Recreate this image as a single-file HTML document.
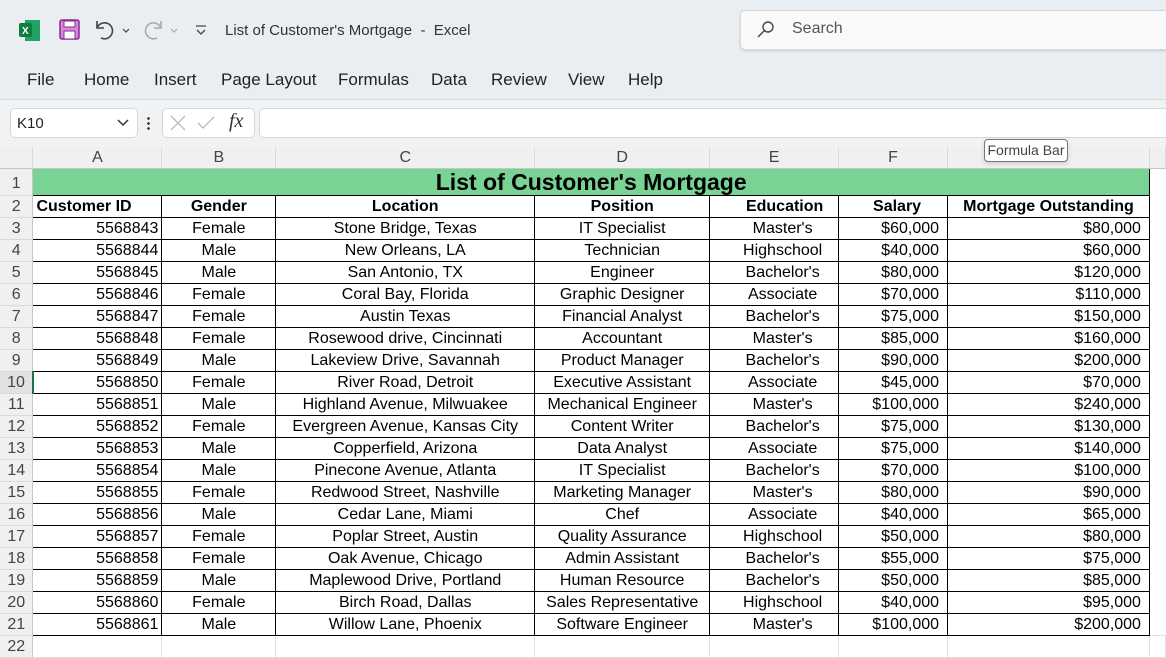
<!DOCTYPE html><html><head><style>
body{margin:0;width:1166px;height:649px;overflow:hidden;background:#fff;font-family:"Liberation Sans",Arial,sans-serif;position:relative}
.top{position:absolute;left:0;top:0;width:1166px;height:99px;background:#e9eef2;border-bottom:1px solid #d6dadd;box-shadow:0 1px 3px rgba(0,0,0,.08)}
.fb{position:absolute;left:0;top:100px;width:1166px;height:47px;background:#f0f2f4}
.t{position:absolute;font-size:15px;color:#333;white-space:nowrap}
.menu{position:absolute;top:70px;font-size:17px;color:#222}
.box{position:absolute;background:#fff;border:1px solid #d5d8db;border-radius:5px}
table{position:absolute;left:0;top:147px;border-collapse:collapse;table-layout:fixed;font-size:16px}
td{padding:0 3px;white-space:nowrap;overflow:hidden;height:21px;line-height:21px;border:1px solid #000}
td:nth-child(7),td:nth-child(8){padding-right:8px}
td:nth-child(6){padding-left:20px}
tr.b td:nth-child(6){padding-left:24px}
tr.b td:nth-child(7){padding-left:16px}
tr.b td:nth-child(8){padding-right:3px}
td.h{background:#f0f0f0;color:#444;text-align:center;border:none;border-right:1px solid #dadada;border-bottom:1px solid #c6c6c6;padding:0!important}
td.r{background:#f0f0f0;color:#444;text-align:center;border:none;border-bottom:1px solid #dadada;border-right:1px solid #c6c6c6;padding:0}
.R{text-align:right}.C{text-align:center}
tr.b td{font-weight:bold}
td.e{border:1px solid #e0e0e0}
</style></head><body>
<div class="top"></div>
<svg style="position:absolute;left:19px;top:20px" width="22" height="21"><rect x="6" y="0" width="15" height="21" fill="#21a366"/><rect x="0" y="3" width="13" height="14" rx="2" fill="#107c41"/><text x="3" y="14" font-size="10" font-weight="bold" fill="#fff" font-family="Liberation Sans">X</text></svg>
<svg style="position:absolute;left:59px;top:19px" width="22" height="22"><rect x="1" y="1" width="19" height="19" rx="2" fill="#d38ad9" stroke="#8a2a92" stroke-width="1.5"/><rect x="5" y="2" width="11" height="6" fill="#fff" stroke="#8a2a92"/><rect x="5" y="12" width="11" height="8" fill="#fff" stroke="#8a2a92"/></svg>
<svg style="position:absolute;left:94px;top:18px" width="40" height="24" fill="none" stroke="#444" stroke-width="1.6"><path d="M3 3v7h7M3 10a8 8 0 1 1 4 10"/><path d="M29 11l3 3 3-3" stroke-width="1.2"/></svg>
<svg style="position:absolute;left:142px;top:18px" width="40" height="24" fill="none" stroke="#aaa" stroke-width="1.6"><path d="M19 3v7h-7M19 10a8 8 0 1 0-4 10"/><path d="M29 11l3 3 3-3" stroke-width="1.2"/></svg>
<svg style="position:absolute;left:194px;top:24px" width="14" height="14" fill="none" stroke="#444" stroke-width="1.3"><path d="M2 2h10M3 6l4 4 4-4"/></svg>
<div class="t" style="left:225px;top:22px">List of Customer's Mortgage&nbsp; -&nbsp; Excel</div>
<div class="box" style="left:740px;top:10px;width:440px;height:38px;background:#fafafa;box-shadow:0 1px 2px rgba(0,0,0,.15)"></div>
<svg style="position:absolute;left:756px;top:20px" width="20" height="20" fill="none" stroke="#444" stroke-width="1.4"><circle cx="12" cy="7" r="5"/><path d="M8.5 10.5L2 17"/></svg>
<div class="t" style="left:792px;top:20px;font-size:16px;color:#555">Search</div>
<div class="menu" style="left:27px">File</div><div class="menu" style="left:84px">Home</div><div class="menu" style="left:154px">Insert</div><div class="menu" style="left:221px">Page Layout</div><div class="menu" style="left:338px">Formulas</div><div class="menu" style="left:431px">Data</div><div class="menu" style="left:491px">Review</div><div class="menu" style="left:568px">View</div><div class="menu" style="left:628px">Help</div>
<div class="fb"></div>
<div class="box" style="left:10px;top:108px;width:126px;height:28px"></div>
<div class="t" style="left:17px;top:115px;color:#222">K10</div>
<svg style="position:absolute;left:116px;top:118px" width="14" height="10" fill="none" stroke="#333" stroke-width="1.5"><path d="M2 2l5 5 5-5"/></svg>
<div style="position:absolute;left:147px;top:116px;width:3px;height:14px;background:radial-gradient(circle,#333 1.2px,transparent 1.5px) 0 0/3px 5px"></div>
<div class="box" style="left:162px;top:108px;width:91px;height:28px"></div>
<svg style="position:absolute;left:168px;top:113px" width="80" height="20" fill="none" stroke="#bbb" stroke-width="1.3"><path d="M3 3l14 14M17 3L3 17M30 10l5 5 11-11"/></svg>
<div class="t" style="left:229px;top:110px;font-family:'Liberation Serif',serif;font-style:italic;font-size:20px;color:#333">fx</div>
<div class="box" style="left:259px;top:108px;width:920px;height:28px"></div>
<table>
<colgroup><col style="width:33px"><col style="width:129px"><col style="width:114px"><col style="width:259px"><col style="width:175px"><col style="width:129px"><col style="width:109px"><col style="width:202px"><col style="width:16px"></colgroup>
<tr style="height:21px"><td class="h"></td><td class="h">A</td><td class="h">B</td><td class="h">C</td><td class="h">D</td><td class="h">E</td><td class="h">F</td><td class="h">G</td><td class="h"></td></tr>
<tr style="height:26px"><td class="r" style="padding-top:2px">1</td><td colspan="7" style="background:#79d394;text-align:center;font-weight:bold;font-size:23px;line-height:26px;height:26px;padding:0">List of Customer's Mortgage</td><td class="e" style="border:none"></td></tr>
<tr class="b"><td class="r" style="font-weight:normal">2</td><td>Customer ID</td><td class="C">Gender</td><td class="C">Location</td><td class="C">Position</td><td class="C">Education</td><td class="C">Salary</td><td class="C">Mortgage Outstanding</td><td style="border:none"></td></tr>
<tr><td class="r">3</td><td class="R">5568843</td><td class="C">Female</td><td class="C">Stone Bridge, Texas</td><td class="C">IT Specialist</td><td class="C">Master's</td><td class="R">$60,000</td><td class="R">$80,000</td><td style="border:none"></td></tr>
<tr><td class="r">4</td><td class="R">5568844</td><td class="C">Male</td><td class="C">New Orleans, LA</td><td class="C">Technician</td><td class="C">Highschool</td><td class="R">$40,000</td><td class="R">$60,000</td><td style="border:none"></td></tr>
<tr><td class="r">5</td><td class="R">5568845</td><td class="C">Male</td><td class="C">San Antonio, TX</td><td class="C">Engineer</td><td class="C">Bachelor's</td><td class="R">$80,000</td><td class="R">$120,000</td><td style="border:none"></td></tr>
<tr><td class="r">6</td><td class="R">5568846</td><td class="C">Female</td><td class="C">Coral Bay, Florida</td><td class="C">Graphic Designer</td><td class="C">Associate</td><td class="R">$70,000</td><td class="R">$110,000</td><td style="border:none"></td></tr>
<tr><td class="r">7</td><td class="R">5568847</td><td class="C">Female</td><td class="C">Austin Texas</td><td class="C">Financial Analyst</td><td class="C">Bachelor's</td><td class="R">$75,000</td><td class="R">$150,000</td><td style="border:none"></td></tr>
<tr><td class="r">8</td><td class="R">5568848</td><td class="C">Female</td><td class="C">Rosewood drive, Cincinnati</td><td class="C">Accountant</td><td class="C">Master's</td><td class="R">$85,000</td><td class="R">$160,000</td><td style="border:none"></td></tr>
<tr><td class="r">9</td><td class="R">5568849</td><td class="C">Male</td><td class="C">Lakeview Drive, Savannah</td><td class="C">Product Manager</td><td class="C">Bachelor's</td><td class="R">$90,000</td><td class="R">$200,000</td><td style="border:none"></td></tr>
<tr><td class="r" style="border-right:2px solid #217346;background:#e1e1e1">10</td><td class="R">5568850</td><td class="C">Female</td><td class="C">River Road, Detroit</td><td class="C">Executive Assistant</td><td class="C">Associate</td><td class="R">$45,000</td><td class="R">$70,000</td><td style="border:none"></td></tr>
<tr><td class="r">11</td><td class="R">5568851</td><td class="C">Male</td><td class="C">Highland Avenue, Milwuakee</td><td class="C">Mechanical Engineer</td><td class="C">Master's</td><td class="R">$100,000</td><td class="R">$240,000</td><td style="border:none"></td></tr>
<tr><td class="r">12</td><td class="R">5568852</td><td class="C">Female</td><td class="C">Evergreen Avenue, Kansas City</td><td class="C">Content Writer</td><td class="C">Bachelor's</td><td class="R">$75,000</td><td class="R">$130,000</td><td style="border:none"></td></tr>
<tr><td class="r">13</td><td class="R">5568853</td><td class="C">Male</td><td class="C">Copperfield, Arizona</td><td class="C">Data Analyst</td><td class="C">Associate</td><td class="R">$75,000</td><td class="R">$140,000</td><td style="border:none"></td></tr>
<tr><td class="r">14</td><td class="R">5568854</td><td class="C">Male</td><td class="C">Pinecone Avenue, Atlanta</td><td class="C">IT Specialist</td><td class="C">Bachelor's</td><td class="R">$70,000</td><td class="R">$100,000</td><td style="border:none"></td></tr>
<tr><td class="r">15</td><td class="R">5568855</td><td class="C">Female</td><td class="C">Redwood Street, Nashville</td><td class="C">Marketing Manager</td><td class="C">Master's</td><td class="R">$80,000</td><td class="R">$90,000</td><td style="border:none"></td></tr>
<tr><td class="r">16</td><td class="R">5568856</td><td class="C">Male</td><td class="C">Cedar Lane, Miami</td><td class="C">Chef</td><td class="C">Associate</td><td class="R">$40,000</td><td class="R">$65,000</td><td style="border:none"></td></tr>
<tr><td class="r">17</td><td class="R">5568857</td><td class="C">Female</td><td class="C">Poplar Street, Austin</td><td class="C">Quality Assurance</td><td class="C">Highschool</td><td class="R">$50,000</td><td class="R">$80,000</td><td style="border:none"></td></tr>
<tr><td class="r">18</td><td class="R">5568858</td><td class="C">Female</td><td class="C">Oak Avenue, Chicago</td><td class="C">Admin Assistant</td><td class="C">Bachelor's</td><td class="R">$55,000</td><td class="R">$75,000</td><td style="border:none"></td></tr>
<tr><td class="r">19</td><td class="R">5568859</td><td class="C">Male</td><td class="C">Maplewood Drive, Portland</td><td class="C">Human Resource</td><td class="C">Bachelor's</td><td class="R">$50,000</td><td class="R">$85,000</td><td style="border:none"></td></tr>
<tr><td class="r">20</td><td class="R">5568860</td><td class="C">Female</td><td class="C">Birch Road, Dallas</td><td class="C">Sales Representative</td><td class="C">Highschool</td><td class="R">$40,000</td><td class="R">$95,000</td><td style="border:none"></td></tr>
<tr><td class="r">21</td><td class="R">5568861</td><td class="C">Male</td><td class="C">Willow Lane, Phoenix</td><td class="C">Software Engineer</td><td class="C">Master's</td><td class="R">$100,000</td><td class="R">$200,000</td><td style="border:none"></td></tr>
<tr><td class="r">22</td><td class="e" style="border-top:1px solid #000"></td><td class="e" style="border-top:1px solid #000"></td><td class="e" style="border-top:1px solid #000"></td><td class="e" style="border-top:1px solid #000"></td><td class="e" style="border-top:1px solid #000"></td><td class="e" style="border-top:1px solid #000"></td><td class="e" style="border-top:1px solid #000"></td><td class="e"></td></tr>
</table>
<div style="position:absolute;left:984px;top:139px;width:82px;height:21px;border:1px solid #777;border-radius:4px;background:#fff;font-size:14px;line-height:21px;text-align:center;color:#444;box-shadow:0 2px 4px rgba(0,0,0,.15)">Formula Bar</div>
</body></html>
